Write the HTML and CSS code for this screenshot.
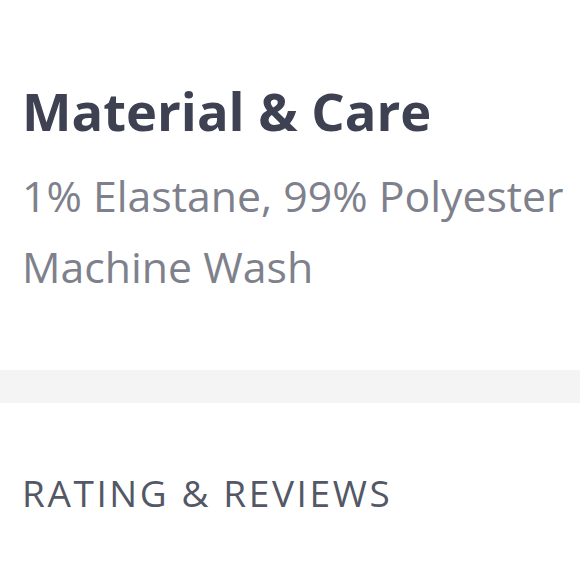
FILE: index.html
```html
<!DOCTYPE html>
<html>
<head>
<meta charset="utf-8">
<link rel="stylesheet" href="styles.css">
</head>
<body>
<section class="care">
  <h2 class="care-title">Material &amp; Care</h2>
  <p class="care-line">1% Elastane, 99% Polyester</p>
  <p class="care-line">Machine Wash</p>
</section>
<div class="divider"></div>
<section class="reviews">
  <h3 class="reviews-title">RATING &amp; REVIEWS</h3>
</section>
</body>
</html>
```
FILE: styles.css
```css
html, body {
  margin: 0;
  padding: 0;
  background: #ffffff;
}
body {
  font-family: "Open Sans", "Noto Sans", sans-serif;
  width: 580px;
  height: 580px;
  overflow: hidden;
}
.care {
  padding: 81px 0 0 22px;
  height: 288px;
  box-sizing: border-box;
}
.care-title {
  margin: 0;
  font-size: 52.5px;
  font-weight: 700;
  color: #3e4152;
  line-height: 60px;
  white-space: nowrap;
}
.care-line {
  margin: 0;
  font-size: 42.8px;
  font-weight: 400;
  color: #7e818c;
  line-height: 71px;
  white-space: nowrap;
}
.care-title + .care-line {
  margin-top: 19px;
}
.divider {
  height: 33px;
  background: #f4f4f5;
  margin-top: 82px;
}
.reviews {
  padding: 70px 22px 0 22px;
}
.reviews-title {
  margin: 0;
  font-size: 37px;
  font-weight: 400;
  letter-spacing: 2.6px;
  color: #535766;
  line-height: 40px;
}
```
